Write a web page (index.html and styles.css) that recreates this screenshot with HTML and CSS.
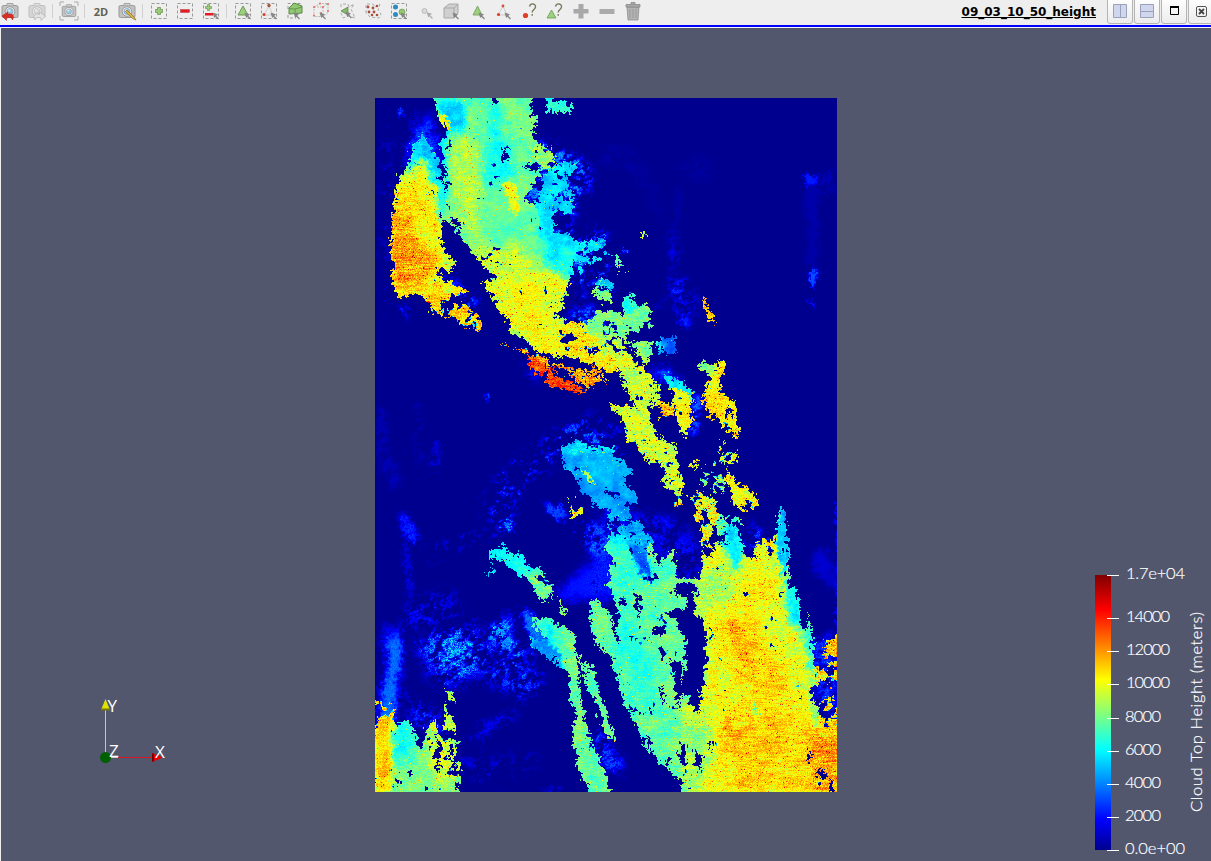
FILE: index.html
```html
<!DOCTYPE html>
<html lang="en">
<head>
<meta charset="utf-8">
<title>09_03_10_50_height</title>
<link rel="stylesheet" href="styles.css">
</head>
<body>
<svg class="defs" width="0" height="0">
  <defs>
    <g id="cam"><rect x="2" y="4.500" width="16" height="12" rx="1.500" fill="#c2c2c2" stroke="#999"/><path d="M7 4.500V2.500h6v2" fill="#d0d0d0" stroke="#a5a5a5"/><circle cx="10" cy="10.500" r="4.800" fill="#e8e8e8" stroke="#999"/><circle cx="10" cy="10.500" r="3" fill="#9cc6e0" stroke="#7a9cb3" stroke-width=".6"/><circle cx="9.300" cy="9.500" r="1.200" fill="#d6edf8"/></g>
    <rect id="sel" x="2.500" y="2.500" width="15" height="15" fill="none" stroke="#999" stroke-dasharray="3 2"/>
    <path id="arr" d="M17.500 18l-3-3M12.500 12.500l3.200 1-2.200 2.200z" fill="#858585" stroke="#858585" stroke-width="1.300"/>
  </defs>
</svg>
<header class="toolbar">
  <div class="tools">
    <span class="tool first"><svg viewBox="0 0 20 20"><use href="#cam"/><path d="M12.500 19c2.500-5-.5-7-4.500-5.500V11l-6 4 4.500 4.500V17c3-1 5-1 6 2z" fill="#dc2f24" stroke="#a51d17" stroke-width=".5"/></svg></span>
    <span class="tool"><svg viewBox="0 0 20 20" opacity=".55"><g filter="grayscale(1)"><use href="#cam"/></g><path d="M8 19c-2.500-5 .5-7 4.500-5.500V11l6 4-4.500 4.500V17c-3-1-5-1-6 2z" fill="#ddd" stroke="#888" stroke-width=".8"/></svg></span>
    <i class="sep"></i>
    <span class="tool"><svg viewBox="0 0 20 20"><g transform="translate(1.500 1.500) scale(.85)"><use href="#cam"/></g><path d="M1 5V1h4M15 1h4v4M19 15v4h-4M5 19H1v-4" fill="none" stroke="#aaa"/></svg></span>
    <i class="sep"></i>
    <span class="tool label2d">2D</span>
    <span class="tool"><svg viewBox="0 0 20 20"><use href="#cam"/><path d="M10 9l7 7 2 3-3.500-1.500-7-7z" fill="#dfb33e" stroke="#89702a" stroke-width=".7"/></svg></span>
    <i class="sep"></i>
    <span class="tool"><svg viewBox="0 0 20 20"><use href="#sel"/><path d="M8.500 6.500h3v2h2v3h-2v2h-3v-2h-2v-3h2z" fill="#9bca7c" stroke="#6d9855" stroke-width=".8"/></svg></span>
    <span class="tool"><svg viewBox="0 0 20 20"><use href="#sel"/><rect x="5.500" y="8.500" width="9" height="3" fill="#e31b23" stroke="#a33" stroke-width=".4"/></svg></span>
    <span class="tool"><svg viewBox="0 0 20 20"><use href="#sel"/><path d="M6.500 3.500h2v2h2v2h-2v2h-2v-2h-2v-2h2z" fill="#9bca7c" stroke="#6d9855" stroke-width=".7"/><rect x="4" y="12" width="8" height="2.500" fill="#e31b23"/><use href="#arr"/></svg></span>
    <i class="sep"></i>
    <span class="tool"><svg viewBox="0 0 20 20"><use href="#sel"/><path d="M10 5l5 9H5z" fill="#9bd07c" stroke="#6f9957"/><use href="#arr"/></svg></span>
    <span class="tool"><svg viewBox="0 0 20 20"><use href="#sel"/><path d="M10 5l-5 9h9z" fill="none" stroke="#ccc"/><circle cx="10" cy="4.500" r="1.700" fill="#a3553c"/><circle cx="5" cy="13.500" r="1.500" fill="#d4432c"/><use href="#arr"/></svg></span>
    <span class="tool"><svg viewBox="0 0 20 20"><path d="M3 8V2.500h13v3M3 14v3h8" fill="none" stroke="#999" stroke-dasharray="3 2"/><path d="M4 7l5-5 8 3v7l-13 1z" fill="#91c773" stroke="#5a8a45"/><path d="M4 7.500l6 .500 7-2M10 8v4" fill="none" stroke="#5a8a45" stroke-width=".8"/><use href="#arr" transform="translate(-3 0)"/></svg></span>
    <span class="tool"><svg viewBox="0 0 20 20"><path d="M3 6l6-3.500h8v9l-5 4H3zM3 6h9v9M12 6l5-3.500" fill="none" stroke="#bbb" stroke-dasharray="2 1"/><g fill="#e9685d"><circle cx="3" cy="6" r="1"/><circle cx="9" cy="2.500" r="1"/><circle cx="17" cy="3" r="1"/><circle cx="12" cy="6" r="1"/><circle cx="3" cy="14.500" r="1"/><circle cx="10" cy="12" r="1"/><circle cx="17" cy="10" r="1"/></g><use href="#arr" transform="translate(-3 0)"/></svg></span>
    <span class="tool"><svg viewBox="0 0 20 20"><path d="M4 6V3h7l1 3 5-3-3 5 4 9-7-2-5 2-2-5" fill="none" stroke="#aaa" stroke-dasharray="3 2"/><path d="M4 10l7-4v8z" fill="#86b968" stroke="#587f42" stroke-width=".7"/><use href="#arr" transform="translate(-3 -1)"/></svg></span>
    <span class="tool"><svg viewBox="0 0 20 20"><path d="M3 12V3h7l2 3 5-3-2 6 3 4-2 4-9-1z" fill="none" stroke="#aaa" stroke-dasharray="3 2"/><g fill="#a6503d"><circle cx="5" cy="6" r="1.400"/><circle cx="10" cy="7" r="1.400"/><circle cx="14" cy="5" r="1.300"/><circle cx="6" cy="11" r="1.400"/><circle cx="11" cy="11" r="1.400"/><circle cx="9" cy="14" r="1.300"/><circle cx="14" cy="14" r="1.300"/></g></svg></span>
    <span class="tool"><svg viewBox="0 0 20 20"><use href="#sel"/><circle cx="6.500" cy="6" r="2.500" fill="#2d8bc0"/><circle cx="6.500" cy="13.500" r="2.500" fill="#2d8bc0"/><circle cx="13" cy="11" r="3" fill="#92c772" stroke="#66954b" stroke-width=".6"/><use href="#arr"/></svg></span>
    <span class="tool"><svg viewBox="0 0 20 20" opacity=".6"><circle cx="9.500" cy="10" r="2.500" fill="#ccc" stroke="#999"/><use href="#arr" transform="translate(0 -.5)"/></svg></span>
    <span class="tool"><svg viewBox="0 0 20 20"><path d="M3 7l5-4h9v9l-4 5H3zM3 7h10v10M13 7l4-4" fill="#d0d0d0" stroke="#a8a8a8"/><use href="#arr"/></svg></span>
    <span class="tool"><svg viewBox="0 0 20 20"><path d="M10.500 5l4.500 9H6z" fill="#9bd07c" stroke="#6f9957" stroke-width=".8"/><use href="#arr"/></svg></span>
    <span class="tool"><svg viewBox="0 0 20 20"><path d="M10 5l-5 9h9z" fill="none" stroke="#ccc"/><circle cx="10" cy="5" r="1.400" fill="#c9513e"/><circle cx="5.500" cy="13.500" r="1.600" fill="#dd3d28"/><use href="#arr"/></svg></span>
    <span class="tool"><svg viewBox="0 0 20 20"><circle cx="6.500" cy="14.500" r="2.600" fill="#df3d27"/><path d="M10.500 5.500c1-4 6.500-3 6 .5-.3 2.500-3.300 2.500-3.300 5.500M13.200 13v1.700" fill="none" stroke="#77775f" stroke-width="1.400"/></svg></span>
    <span class="tool"><svg viewBox="0 0 20 20"><path d="M6.500 9l4.500 8H2z" fill="#9bd07c" stroke="#6f9957" stroke-width=".8"/><path d="M10.500 5.500c1-4 6.500-3 6 .5-.3 2.500-3.300 2.500-3.300 5.500M13.200 13v1.700" fill="none" stroke="#77775f" stroke-width="1.400"/></svg></span>
    <span class="tool"><svg viewBox="0 0 20 20"><path d="M7.500 3h5v5h5v4.500h-5v5h-5v-5h-5V8h5z" fill="#a8a8a8"/></svg></span>
    <span class="tool"><svg viewBox="0 0 20 20"><rect x="2.500" y="8" width="15" height="5" fill="#aaa"/></svg></span>
    <span class="tool"><svg viewBox="0 0 20 20"><path d="M4 6h12l-1 13H5z" fill="#b4b4b4" stroke="#8d8d8d" stroke-width=".8"/><path d="M3 3.500h14V6H3zM8 3V1.500h4V3" fill="#aaa" stroke="#888" stroke-width=".8"/><path d="M7 8v9M10 8v9M13 8v9" stroke="#999"/></svg></span>
  </div>
  <div class="frame">
    <span class="title">09_03_10_50_height</span>
    <div class="buttons">
      <span class="btn"><svg width="14" height="14"><path d="M.5.500h13v13H.5zM7.500 1v12" fill="#cfd6ee" stroke="#9aa2bb"/></svg></span>
      <span class="btn"><svg width="14" height="14"><path d="M.5.500h13v13H.5zM1 7.500h12" fill="#cfd6ee" stroke="#9aa2bb"/></svg></span>
      <span class="btn"><svg width="14" height="14"><path d="M3.500 3.500h8v7h-8z" fill="none" stroke="#000"/><path d="M3 3h9" stroke="#000" stroke-width="2"/></svg></span>
      <span class="btn"><svg width="14" height="14"><rect x="2.500" y="2.500" width="10" height="10" rx="1.500" fill="none" stroke="#555"/><path d="M5 5l5 5M10 5l-5 5" stroke="#444" stroke-width="1.800"/></svg></span>
    </div>
  </div>
</header>
<main class="view">
  <canvas class="raster" id="raster" width="462" height="694"></canvas>
  <svg class="axes" width="90" height="80" viewBox="80 690 90 80">
    <path d="M105.500 755V710" stroke="#d6d63c"/><path d="M105.500 699l4.500 11h-9z" fill="#e2e200"/><path d="M101 709.500h9" stroke="#77770a" stroke-width="2"/>
    <path d="M108 757.500h11" stroke="#ccc"/><path d="M118 757.500h35" stroke="#d31a24"/><path d="M163 757.500l-11-4.500v9z" fill="#e80000"/><path d="M153 753.500v8" stroke="#700" stroke-width="2"/>
    <circle cx="105.500" cy="757.500" r="5.500" fill="#006000"/>
    <g class="axis-text"><text x="107.500" y="711.500">Y</text><text x="109" y="756.500">Z</text><text x="155" y="757.500">X</text></g>
  </svg>
  <svg class="legend" width="131" height="301" viewBox="1080 560 131 301">
    <defs><linearGradient id="jet" x1="0" y1="1" x2="0" y2="0"><stop offset="0" stop-color="#00008f"/><stop offset=".111" stop-color="#00f"/><stop offset=".365" stop-color="#0ff"/><stop offset=".492" stop-color="#80ff80"/><stop offset=".619" stop-color="#ff0"/><stop offset=".873" stop-color="#f00"/><stop offset="1" stop-color="#800000"/></linearGradient></defs>
    <rect x="1095" y="575" width="16" height="275" fill="url(#jet)"/>
    <path d="M1107 575.500h12M1107 618.500h12M1107 651.500h12M1107 684.500h12M1107 718.500h12M1107 751.500h12M1107 784.500h12M1107 817.500h12M1107 850.500h12" stroke="#fff"/>
    <g class="legend-text">
      <text x="1126" y="579" textLength="59">1.7e+04</text><text x="1126" y="622" textLength="44">14000</text><text x="1126" y="655" textLength="44">12000</text><text x="1126" y="688" textLength="44">10000</text>
      <text x="1125" y="722" textLength="36">8000</text><text x="1125" y="755" textLength="36">6000</text><text x="1125" y="788" textLength="36">4000</text><text x="1125" y="821" textLength="36">2000</text><text x="1125" y="854" textLength="60">0.0e+00</text>
      <text transform="translate(1202 812) rotate(-90)" textLength="200">Cloud Top Height (meters)</text>
    </g>
  </svg>
</main>
<script src="raster.js"></script>
</body>
</html>
```
FILE: styles.css
```css
* { box-sizing: border-box; }
body { margin: 0; width: 1211px; height: 861px; overflow: hidden; display: flex; flex-direction: column; background: #eee; font-family: "DejaVu Sans", sans-serif; }
.defs { position: absolute; }
.toolbar { height: 28px; flex: none; display: flex; justify-content: space-between; background: linear-gradient(#eee 25px, #0000ff 25px, #0000ff 27px, #f4f4f4 27px); overflow: hidden; }
.tools { display: flex; height: 22px; margin-left: -3px; }
.tool { width: 26px; height: 22px; flex: none; display: flex; align-items: center; justify-content: center; }
.tool.first { margin-right: 1px; }
.tool svg { width: 20px; height: 20px; }
.label2d { font: bold 11px "Open Sans", sans-serif; color: #626252; }
.sep { width: 6px; height: 14px; margin-top: 4px; flex: none; border-left: 2px solid #eee; border-right: 3px solid #eee; background: #d0d0d0; }
.frame { display: flex; height: 24px; margin-right: -3px; }
.title { font-size: 12px; font-weight: bold; line-height: 24px; margin-right: 11px; text-decoration: underline; color: #000; white-space: nowrap; }
.buttons { display: flex; gap: 1px; }
.btn { width: 26px; height: 28px; margin-top: -4px; border: 1px solid #b4b4b4; border-radius: 3px; background: linear-gradient(#fff, #ececec); display: flex; align-items: center; justify-content: center; padding-top: 2px; }
.view { position: relative; flex: 1; margin-left: 1px; padding: 70px 0 0 374px; background: #52576e; }
.raster { display: block; width: 462px; height: 694px; background: #00008f; }
.axes { position: absolute; left: 79px; top: 662px; }
.legend { position: absolute; right: 0; bottom: 0; }
.axis-text text { font: 17px "Open Sans", sans-serif; fill: #fff; }
.legend-text text { font: 300 16.5px Lato, sans-serif; fill: #fff; stroke: #fff; stroke-width: .2px; }
```
FILE: raster.js
```js
// Cloud-top height field. Outlines are traced in tiles at three units per pixel.
// Each entry: [height fraction, grain, hole density, outline points, blur]
const W = 462, H = 694;
function layer() {
  const c = document.createElement("canvas");
  c.width = W; c.height = H;
  return c.getContext("2d", { willReadFrequently: true });
}
const cloud = layer(), haze = layer();
function draw(ctx, tile, op, list) {
  ctx.globalCompositeOperation = op;
  for (const [v, g, h, pts, blur] of list) {
    const p = pts.split(" ").map(s => s.split(",").map(Number));
    ctx.fillStyle = `rgb(${v * 255 | 0},${g * 255 | 0},${h * 255 | 0})`;
    ctx.filter = blur ? `blur(${blur}px)` : "none";
    ctx.beginPath();
    p.forEach(([x, y]) => ctx.lineTo(x / 3 + tile[0] - 375, y / 3 + tile[1] - 98));
    ctx.closePath();
    ctx.fill();
  }
}
const A = [370, 90], B = [480, 280], C = [370, 400], D = [370, 590], E = [590, 500], F = [600, 90];

draw(cloud, A, "source-over", [
  [.47, .25, .05, "190,24 480,24 485,70 503,100 485,140 520,180 515,215 520,240 505,260 500,300 470,335 500,345 510,400 560,430 575,460 600,490 600,560 590,620 545,665 580,690 600,740 440,740 400,670 360,610 340,560 300,480 270,430 245,410 220,400 215,330 225,250 215,180 225,120 210,80"],
  [.32, .12, .26, "500,300 530,250 550,220 620,215 625,240 590,260 590,290 620,330 600,380 560,360 550,390 560,430 600,440 600,500 500,440"],
  [.53, .4, .3, "485,170 540,155 555,200 530,260 500,220"],
  [.36, .2, .36, "590,430 640,460 700,460 720,500 660,530 600,560 590,480"],
  [.41, .15, .05, "520,20 598,40 600,66 530,62"],
  [.55, .5, .05, "155,130 175,150 205,205 215,300 215,370 220,410 205,425 225,480 255,520 240,545 200,540 225,580 230,625 180,630 150,600 95,605 90,560 68,510 62,430 75,370 80,300 100,235 120,190"],
  [.68, .7, .44, "65,540 220,560 240,640 180,640 140,610 90,625"],
  [.66, .6, .28, "170,620 240,650 250,640 320,665 340,705 330,720 285,718 240,680 190,670"],
  [.62, .5, .32, "215,565 250,580 300,610 260,618 215,610"],
  [.46, .3, .15, "680,560 710,575 725,630 690,625"]
]);
draw(cloud, A, "source-atop", [
  [.34, .15, 0, "205,24 250,24 290,50 285,130 240,130 230,200 215,420 200,300 150,150 225,120", 2],
  [.54, .4, 0, "240,150 320,130 345,230 330,440 280,440 240,320", 5],
  [.38, .15, .08, "350,24 390,60 420,180 430,260 400,330 360,300 340,230 340,120", 6],
  [.47, .15, 0, "360,310 410,280 500,350 500,420 540,450 520,540 440,500 340,440", 6],
  [.36, .15, 0, "530,450 600,440 620,480 590,560 520,540", 3],
  [.6, .35, 0, "400,280 430,280 450,350 435,380 405,320", 1],
  [.58, .42, .02, "310,480 440,460 500,520 590,580 545,665 600,740 430,740 330,560", 5],
  [.63, .5, 0, "80,300 110,250 180,280 205,400 230,620 60,640 60,400", 5],
  [.71, .65, 0, "60,360 130,370 130,440 210,520 150,600 95,605 62,500", 5],
  [.32, .2, 0, "155,110 205,190 215,280 195,250 170,190 105,250 115,180", 3],
  [.61, .5, 0, "200,60 240,90 240,130 215,110", 0]
]);
draw(cloud, B, "source-over", [
  [.6, .45, .03, "0,0 240,0 270,20 245,60 240,80 215,100 250,130 290,125 310,160 340,170 345,230 320,240 290,260 230,245 160,200 130,170 80,120 40,60"],
  [.64, .6, .28, "240,130 340,130 400,220 420,280 370,270 340,250 240,250"],
  [.8, .6, .05, "132,215 180,240 230,275 325,335 260,328 200,308 150,268"],
  [.72, .7, .2, "235,255 290,268 390,312 340,305 325,325 280,290"],
  [.72, .7, .35, "60,190 85,215 160,205 220,240 330,250 395,305 350,285 180,245"],
  [.57, .5, .16, "325,130 350,100 400,95 430,110 430,60 455,35 465,80 510,60 515,135 480,160 440,150 450,190 500,180 522,190 515,240 490,250 455,200 400,165 440,210 500,270 535,310 535,370 510,380 510,430 530,470 580,490 600,560 610,670 590,660 550,600 545,560 480,520 445,470 430,420 385,375 440,370 470,390 430,320 420,270 380,220 350,180"],
  [.51, .3, .05, "340,20 390,40 395,70 345,55"],
  [.3, .1, 0, "350,0 385,0 395,30 370,25"],
  [.33, .12, .03, "550,285 600,300 635,330 640,360 600,350 560,320"],
  [.61, .45, .06, "570,320 635,345 640,370 620,460 605,470 590,400"],
  [.63, .5, .12, "650,250 665,235 700,260 740,240 735,290 715,310 740,355 770,360 765,420 780,475 720,440 700,390 695,430 670,350 690,290"],
  [.23, .05, .08, "530,180 582,172 585,222 545,228"],
  [.68, .5, .05, "665,50 690,85 708,132 682,120"],
  [.28, .06, .04, "250,500 290,480 330,495 400,500 400,530 440,545 460,585 430,590 470,650 460,670 430,660 450,710 400,690 340,660 300,635 295,610 250,560"],
  [.55, .3, 0, "300,562 330,572 348,608 330,604"],
  [.63, .5, .08, "740,560 770,610 810,620 835,680 765,685 760,640 738,600"],
  [.6, .5, .1, "622,555 662,548 640,577"],
  [.66, .8, .42, "530,360 600,380 540,420"], [.58, .7, .44, "720,480 770,500 770,550 720,550"],
  [.6, .8, .5, "640,640 700,650 720,740 640,720"], [.5, .8, .56, "660,560 730,540 740,640 660,620"],
  [.6, .7, .42, "260,650 310,690 280,720"]
]);
draw(cloud, B, "source-atop", [
  [.49, .35, .18, "300,120 420,80 430,40 460,20 540,60 540,260 450,200 400,160 370,190", 3],
  [.4, .1, 0, "430,60 455,35 462,100 435,100", 1],
  [.34, .4, .15, "250,495 330,490 410,500 410,515 250,520", 2],
  [.34, .15, 0, "295,620 350,650 450,690 450,710 350,670", 2],
  [.49, .4, .1, "650,250 665,235 700,260 690,290", 2]
]);
draw(cloud, C, "source-over", [
  [.35, .15, .05, "360,460 395,430 425,470 450,455 480,500 525,510 525,545 550,545 540,595 500,590 480,545 430,510 395,475 360,485"],
  [.32, .1, 0, "358,510 376,503 368,528 358,525"]
]);
draw(cloud, C, "source-atop", [[.49, .4, .12, "470,515 550,520 550,600 500,600", 3]]);
draw(cloud, D, "source-over", [
  [.49, .4, .08, "10,420 40,370 65,400 70,430 90,390 130,400 135,470 160,470 165,420 190,385 200,440 225,400 262,410 263,612 8,612"],
  [.65, .6, .5, "15,330 60,330 80,420 20,430"], [.55, .5, .52, "230,280 262,340 262,410 225,410"],
  [.28, .25, .25, "370,130 400,90 400,130 440,160 400,165"],
  [.47, .35, .05, "490,80 560,95 620,130 610,160 625,230 635,330 650,400 655,450 690,520 720,570 720,612 670,612 630,560 610,430 615,370 600,320 595,260 570,225 480,170 480,140 530,150 500,120"],
  [.46, .35, .08, "605,150 640,220 680,250 670,290 700,330 720,420 705,410 690,330 660,300 640,250"],
  [.49, .4, .1, "490,0 545,0 525,40"], [.5, .4, .35, "560,20 590,70 575,80"],
  [.51, .45, .12, "660,70 680,30 720,90 750,180 740,230 680,150"]
]);
draw(cloud, D, "source-atop", [
  [.67, .4, 0, "10,400 65,390 62,610 20,610", 2],
  [.38, .2, 0, "75,390 132,400 130,500 75,540", 4],
  [.57, .5, .3, "175,380 262,400 262,560 190,580", 3],
  [.25, .15, .08, "470,130 540,150 590,225 570,230 480,180", 2],
  [.38, .2, 0, "490,80 550,95 570,170 530,150", 3]
]);
draw(cloud, E, "source-over", [
  [.46, .36, .09, "60,100 150,80 190,120 200,190 250,150 262,230 330,230 335,150 360,170 370,130 410,120 430,50 445,110 460,150 480,180 500,180 530,170 540,110 562,105 565,50 577,5 590,90 590,200 600,260 620,260 630,370 650,390 660,330 670,440 680,520 700,680 745,690 745,885 275,885 265,840 200,780 150,700 100,600 70,500 85,450 80,330 55,250 60,190 45,140"],
  [.66, .8, .42, "670,480 700,440 745,400 745,700 690,700"],
  [.47, .4, .12, "0,300 70,340 50,370 95,500 50,440 40,460 0,400"],
  [.45, .35, .1, "0,490 25,560 50,640 75,720 50,710 20,620 0,570"],
  [.45, .35, .1, "0,720 30,780 50,885 0,885"],
  [.28, .06, .02, "0,0 90,0 120,50 125,70 60,35 0,10"],
  [.29, .25, .36, "60,40 140,60 190,110 170,190 60,120"],
  [.66, .8, .4, "245,0 290,0 290,25 255,20"], [.64, .6, .25, "425,0 510,0 480,22 430,22"],
  [.6, .8, .38, "315,15 340,15 365,90 360,140 340,140"], [.48, .8, .42, "375,50 450,50 450,110 380,120"],
  [.5, .7, .42, "495,130 540,130 530,180 490,180"]
]);
draw(cloud, E, "source-atop", [
  [.4, .25, .02, "60,100 110,100 150,400 220,620 140,600 60,430", 7],
  [.6, .48, .015, "335,140 540,100 570,120 590,350 660,440 670,680 745,700 745,885 290,885 270,640 335,570 350,430 320,330", 4],
  [.52, .45, .02, "335,200 420,190 440,320 330,330", 6],
  [.52, .45, .03, "270,650 360,650 340,885 270,885", 7],
  [.66, .5, 0, "370,360 460,270 540,450 600,560 650,680 745,700 745,885 400,885 390,700 470,560 390,430", 9],
  [.73, .6, 0, "395,650 460,700 440,730 400,690", 2], [.72, .7, .04, "650,700 745,690 745,885 680,885", 6],
  [.72, .6, 0, "410,360 435,360 455,450 435,440", 2],
  [.33, .1, .05, "425,20 450,90 460,150 445,220 420,200 400,130", 3],
  [.3, .1, 0, "562,105 577,0 592,90 592,200 575,230", 1],
  [.37, .2, 0, "580,230 625,250 640,390 600,360", 2], [.4, .2, 0, "650,330 672,370 675,500 655,520", 2],
  [.2, .2, .2, "110,130 165,140 195,250 160,240", 2],
  [.39, .1, 0, "490,600 505,640 490,640", 1]
]);
draw(cloud, A, "destination-out", [
  [0, 0, 0, "362,24 377,24 380,42 368,40"], [0, 0, 0, "500,262 520,275 512,310 498,348 465,335"],
  [0, 0, 0, "240,380 270,390 275,415 245,400"], [0, 0, 0, "455,225 500,225 500,250"],
  [0, 0, 0, "300,500 320,500 380,560 345,570 320,530"], [0, 0, 0, "388,178 418,208 400,215"]
]);
draw(cloud, B, "destination-out", [
  [0, 0, 0, "368,632 412,648 390,657"], [0, 0, 0, "737,375 757,398 740,412"], [0, 0, 0, "508,335 515,375 505,370"],
  [0, 0, 0, "150,210 320,245 340,275 280,265 200,240"], [0, 0, 0, "210,258 250,270 300,318 240,290"]
]);
draw(cloud, E, "destination-out", [
  [0, 0, 0, "262,250 315,255 320,340 350,400 350,470 335,570 315,640 285,570 290,450 270,390 240,330 300,320 290,285 255,290"],
  [0, 0, 0, "205,375 230,390 215,410 185,400"], [0, 0, 0, "245,480 275,485 285,570 262,610"],
  [0, 0, 0, "215,440 230,450 225,480 215,470"], [0, 0, 0, "210,560 222,570 215,610 208,600"],
  [0, 0, 0, "135,270 150,290 150,350 138,330"], [0, 0, 0, "272,730 290,750 282,795 263,780"],
  [0, 0, 0, "318,748 338,758 326,812 313,790"], [0, 0, 0, "356,722 377,733 366,753"],
  [0, 0, 0, "172,710 190,720 188,750"], [0, 0, 0, "230,765 245,770 240,800 228,795"],
  [0, 0, 0, "648,748 665,760 656,782"], [0, 0, 0, "690,808 702,820 685,855"],
  [0, 0, 0, "655,560 710,535 725,590 700,610 690,640"], [0, 0, 0, "670,460 705,440 705,490 675,510"],
  [0, 0, 0, "715,835 732,850 720,885"]
]);
draw(cloud, D, "destination-out", [[0, 0, 0, "200,420 215,470 205,560 195,500"], [0, 0, 0, "240,440 250,480 250,570 240,520"], [0, 0, 0, "135,400 163,400 158,465 135,465"]]);
draw(cloud, F, "source-over", [
  [.67, .6, .05, "303,618 312,618 320,655 347,702 323,697 316,665"], [.55, .7, .05, "120,425 142,425 142,440 130,438"],
  [.5, .6, .28, "45,490 70,520 90,547 60,547"], [.3, .6, .4, "0,440 15,450 12,490 0,490"]
]);

// Thin low cloud: soft edges, broken up by noise.
draw(haze, A, "source-over", [
  [.17, .3, .2, "135,60 150,110 180,60 190,140 210,140 205,230 100,235 120,160 130,140", 3],
  [.1, .5, .7, "30,80 60,110 70,350 40,330", 4], [.18, .4, .3, "85,60 100,60 100,85 85,80", 1],
  [.24, .5, .5, "500,160 570,160 660,230 660,270 610,390 540,390 460,330 460,230", 4],
  [.24, .6, .62, "540,390 620,410 710,430 720,640 600,590 580,500", 5],
  [.18, .5, .55, "205,540 280,570 330,640 290,690 220,590", 3], [.14, .5, .45, "90,640 120,640 125,690 100,690", 2],
  [.07, .5, .7, "20,380 60,400 60,700 25,700", 4]
]);
draw(haze, B, "source-over", [
  [.22, .6, .58, "20,650 100,550 250,440 330,400 450,480 440,520 250,530 150,580 80,700 20,720", 6],
  [.24, .5, .4, "260,90 340,80 380,130 340,200 280,150", 4], [.21, .3, .2, "500,262 550,270 610,300 550,310", 3],
  [.22, .4, .35, "650,340 675,365 640,465 625,460 640,380", 2], [.13, .5, .55, "570,0 630,10 650,90 610,140 570,60", 5],
  [.18, .5, .4, "130,240 160,270 180,310 150,300", 3], [.2, .3, .3, "190,665 240,690 265,715 230,710", 2],
  [.19, .2, .3, "10,340 30,345 25,370", 1]
]);
draw(haze, C, "source-over", [
  [.17, .7, .64, "160,450 250,420 370,390 350,300 400,220 520,140 560,150 540,200 430,270 430,400 350,410 250,450 180,490", 4],
  [.26, .5, .4, "380,385 400,365 430,360 430,400 390,390", 2], [.13, .1, .02, "545,580 600,540 630,505 720,490 760,520 720,600 590,600", 4],
  [.14, .4, .35, "85,330 120,350 145,420 115,440 115,530 135,600 105,550 105,430", 2],
  [.1, .6, .5, "190,110 205,120 200,230 170,230", 2], [.2, .2, .2, "520,305 545,315 590,360 580,365 540,330", 2],
  [.05, .5, .4, "20,20 40,20 50,150 90,240 60,270 20,150", 3], [.22, .7, .6, "620,370 710,370 710,430 620,420", 3],
  [.05, .4, .5, "140,0 155,0 155,240 140,240", 2]
]);
draw(haze, D, "source-over", [
  [.22, .2, .1, "45,100 70,150 90,90 100,180 90,270 70,420 15,430 35,290 50,240", 3],
  [.27, .8, .45, "150,150 270,90 330,130 360,200 330,250 220,290 170,230", 7],
  [.18, .8, .58, "330,160 480,180 530,290 480,330 340,270", 6], [.27, .5, .4, "340,140 410,70 440,150 450,230 410,220 400,170", 3],
  [.22, .3, .3, "445,60 470,60 540,120 530,190 480,170 480,140", 2], [.13, .5, .45, "290,440 400,375 465,370 400,400 320,450", 3],
  [.08, .8, .6, "270,460 350,490 540,500 380,590 270,550", 5], [.12, .6, .6, "110,30 250,0 280,100 170,130 110,120", 6],
  [.17, .5, .55, "90,300 140,340 240,380 230,430 130,410", 5], [.18, .5, .5, "370,250 520,280 480,300 380,300", 3],
  [.14, .5, .5, "520,600 560,590 570,606 520,606", 2], [.2, .5, .5, "660,420 720,430 720,520 680,490", 3]
]);
draw(haze, E, "source-over", [
  [.14, .4, .2, "0,70 60,90 60,180 60,280 0,290", 5], [.12, .5, .5, "180,40 300,100 335,170 330,250 260,250 190,160", 6],
  [.13, .5, .5, "20,0 100,20 250,60 230,110 60,100", 6], [.07, .1, .1, "670,160 710,150 745,260 720,265 700,220 670,220", 3],
  [.19, .5, .45, "30,730 100,780 90,830 40,800", 4], [.2, .5, .45, "0,100 60,90 60,160 0,170", 4],
  [.18, .5, .5, "450,100 500,60 540,120 490,190", 4], [.16, .5, .45, "660,420 740,400 740,880 680,700", 4],
  [.09, .1, 0, "738,0 744,0 744,880 738,880", 0]
]);
draw(haze, F, "source-over", [
  [.14, .1, .02, "615,250 640,260 655,250 655,280 645,303 615,280", 1], [.035, .1, .05, "618,290 655,290 650,540 625,540", 3],
  [.19, .1, .02, "628,535 650,540 650,575 643,592 628,580", 1], [.05, .5, .4, "660,260 690,230 690,310 670,320", 2],
  [.03, .2, .2, "230,290 240,290 230,440 217,420", 2], [.11, .5, .45, "205,430 220,420 235,540 205,530", 3],
  [.16, .5, .45, "205,560 250,570 270,600 240,620 210,590", 3], [.22, .5, .3, "65,470 80,480 80,495 65,490", 1],
  [.025, .6, .4, "0,170 100,190 180,330 190,430 150,310 80,230 0,220", 5], [.025, .6, .4, "230,240 310,190 340,275 240,250", 4],
  [.17, .2, .2, "240,690 265,685 265,710 240,705", 2], [.14, .3, .3, "165,640 190,645 180,655", 2],
  [.15, .3, .3, "627,635 648,640 645,655 630,650", 1]
]);

function hash(x, y, s) {
  let h = Math.imul(x | 0, 374761393) ^ Math.imul(y | 0, 668265263) ^ Math.imul(s, 1274126177);
  h = Math.imul(h ^ h >>> 13, 1274126177);
  h = Math.imul(h ^ h >>> 15, 2246822519);
  return ((h ^ h >>> 16) >>> 0) / 4294967296;
}
function noise(x, y, s) {
  const i = Math.floor(x), j = Math.floor(y);
  let u = x - i, v = y - j;
  u *= u * (3 - 2 * u); v *= v * (3 - 2 * v);
  const a = hash(i, j, s), b = hash(i + 1, j, s), c = hash(i, j + 1, s), d = hash(i + 1, j + 1, s);
  return a + (b - a) * u + (c - a) * v + (a - b - c + d) * u * v;
}
const fbm = (x, y, s) => noise(x / 12, y / 12, s) * .4 + noise(x / 5, y / 5, s + 1) * .35 + noise(x / 2, y / 2, s + 2) * .25;
const fine = (x, y, s) => noise(x / 9, y / 9, s) * .3 + noise(x / 3.5, y / 3.5, s + 1) * .35 + noise(x / 1.6, y / 1.6, s + 2) * .35;
const clamp = (v, a, b) => Math.max(a, Math.min(b, v));
const STOPS = [[0, 0, 0, 143], [.111, 0, 0, 255], [.365, 0, 255, 255], [.492, 128, 255, 128], [.619, 255, 255, 0], [.873, 255, 0, 0], [1, 128, 0, 0]];
function jet(t) {
  t = clamp(t, 0, 1);
  let k = 1;
  while (t > STOPS[k][0]) k++;
  const a = STOPS[k - 1], b = STOPS[k], f = (t - a[0]) / (b[0] - a[0]);
  return [1, 2, 3].map(n => a[n] + (b[n] - a[n]) * f);
}
const cd = cloud.getImageData(0, 0, W, H).data, hd = haze.getImageData(0, 0, W, H).data;
const ctx = document.getElementById("raster").getContext("2d");
const out = ctx.createImageData(W, H);
for (let y = 0; y < H; y++) {
  for (let x = 0; x < W; x++) {
    const sx = clamp(Math.round(x + (fine(x, y, 11) - .5) * 15), 0, W - 1);
    const sy = clamp(Math.round(y + (fine(x, y, 21) - .5) * 15), 0, H - 1);
    const i = (sy * W + sx) * 4, tex = fbm(x, y, 31);
    let v = 0;
    const ha = hd[i + 3] / 255;
    if (ha > .02) {
      // Slanted sampling gives the wisps a south-west to north-east lean.
      const t = fine(x * .8 + y * .4, y * .8 - x * .2, 101);
      const wisps = clamp((t - hd[i + 2] / 255 * .9) * 4 + .2, 0, 1);
      v = hd[i] / 255 * ha * wisps * (1 + (hash(x, y, 41) - .5) * hd[i + 1] / 255);
    }
    if (cd[i + 3] > 128) {
      const hole = cd[i + 2] / 255, cut = .21 + hole * .58;
      if (hole < .01 || tex > cut) {
        const g = cd[i + 1] / 255, r = hash(x, y, 51);
        const streak = noise(x / 9, y * .97, 61) - .5;
        v = cd[i] / 255 + (r - .5) * g * .21 + streak * g * .17 + (fbm(x, y, 71) - .5) * .15;
        if (hash(x, y, 81) > 1 - g * .04) v += .18;
        if (tex < cut + .03 && hole > .01) v *= hash(x, y, 91) > .5 ? .5 : 1;
      }
    }
    const c = jet(v), o = (y * W + x) * 4;
    out.data[o] = c[0]; out.data[o + 1] = c[1]; out.data[o + 2] = c[2]; out.data[o + 3] = 255;
  }
}
ctx.putImageData(out, 0, 0);
```
